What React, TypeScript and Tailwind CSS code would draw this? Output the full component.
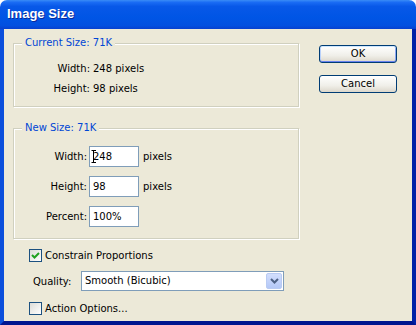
import React from "react";

function Checkbox({ checked }: { checked?: boolean }) {
    return (
        <div className="w-[13px] h-[13px] border border-[#1C5180] bg-[linear-gradient(135deg,#dcdcd7,#ffffff)] flex items-center justify-center">
            {checked && (
                <svg width="9" height="9" viewBox="0 0 9 9">
                    <path d="M1 4 L3.5 6.5 L8 2" fill="none" stroke="#21A121" strokeWidth="2" />
                </svg>
            )}
        </div>
    );
}

function Field({ value, caret }: { value: string; caret?: boolean }) {
    return (
        <div className="relative h-[21px] border border-[#7F9DB9] bg-white pl-[3px] leading-[19px]">
            {value}
            {caret && (
                <svg className="absolute left-[1px] top-[3px]" width="6" height="13" viewBox="0 0 6 13">
                    <path d="M0.5 0.5 H5 M2.5 0.5 V12.5 M0.5 12.5 H5" fill="none" stroke="#000" strokeWidth="1" />
                </svg>
            )}
        </div>
    );
}

export default function App() {
    return (
        <div className="w-[416px] h-[325px] bg-white font-['DejaVu_Sans',sans-serif] text-[10px] text-black select-none">
            <div className="h-[29px] rounded-t-[7px] bg-[linear-gradient(180deg,#3a8cf6_0%,#1a6cf4_8%,#0858e8_22%,#0055e5_60%,#0250e0_88%,#0740cf_100%)] flex items-center pl-[7px] pb-[1px]">
                <span className="font-['Liberation_Sans',sans-serif] font-bold text-[13px] text-white [text-shadow:1px_1px_0_#0b2a9a]">Image Size</span>
            </div>

            <div className="h-[296px] flex bg-[#ECE9D8] border-l-[4px] border-r-[4px] border-b-[4px] border-l-[#0b4fdc] border-r-[#0021a7] border-b-[#00158f]">
                {/* left column */}
                <div className="ml-[9px] w-[286px] pt-[8px]">
                    <fieldset className="border border-[#D0D0BF] shadow-[inset_1px_1px_0_#fff,1px_1px_0_#fff] pb-[7px]">
                        <legend className="ml-[8px] px-[3px] leading-[12px] text-[#0046D5] bg-[#ECE9D8]">Current Size: 71K</legend>
                        <div className="grid grid-cols-[76px_auto] gap-x-[3px] mt-[10px] leading-5">
                            <div className="text-right">Width:</div>
                            <div>248 pixels</div>
                            <div className="text-right">Height:</div>
                            <div>98 pixels</div>
                        </div>
                    </fieldset>

                    <fieldset className="mt-[15px] border border-[#D0D0BF] shadow-[inset_1px_1px_0_#fff,1px_1px_0_#fff] pb-[11px]">
                        <legend className="ml-[8px] px-[3px] leading-[12px] text-[#0046D5] bg-[#ECE9D8]">New Size: 71K</legend>
                        <div className="grid grid-cols-[73px_50px_auto] gap-x-[2px] gap-y-[9px] items-center mt-[12px]">
                            <div className="text-right">Width:</div>
                            <Field value="248" caret />
                            <div className="pl-[2px]">pixels</div>
                            <div className="text-right">Height:</div>
                            <Field value="98" />
                            <div className="pl-[2px]">pixels</div>
                            <div className="text-right">Percent:</div>
                            <Field value="100%" />
                            <div></div>
                        </div>
                    </fieldset>

                    <div className="mt-[10px] ml-[16px] flex items-center gap-[3px] h-[13px]">
                        <Checkbox checked />
                        <span>Constrain Proportions</span>
                    </div>

                    <div className="mt-[9px] ml-[20px] flex items-center">
                        <span className="w-[48px]">Quality:</span>
                        <div className="w-[203px] h-[20px] border border-[#7F9DB9] bg-white flex p-px">
                            <div className="flex-1 pl-[2px] leading-[16px]">Smooth (Bicubic)</div>
                            <div className="w-[16px] rounded-[2px] border border-[#B9CBF3] bg-[linear-gradient(180deg,#d2defd,#b4c8f7)] flex items-center justify-center">
                                <svg width="9" height="6" viewBox="0 0 9 6">
                                    <path d="M1 1 L4.5 4.5 L8 1" fill="none" stroke="#4D6185" strokeWidth="2" />
                                </svg>
                            </div>
                        </div>
                    </div>

                    <div className="mt-[11px] ml-[16px] flex items-center gap-[3px] h-[13px]">
                        <Checkbox />
                        <span>Action Options...</span>
                    </div>
                </div>

                {/* right column */}
                <div className="ml-[20px] w-[78px] pt-[16px] flex flex-col gap-[12px]">
                    <button className="h-[18px] rounded-[3px] border border-[#003C74] bg-[linear-gradient(180deg,#ffffff,#f0efe9_60%,#dcd7cb)] shadow-[inset_0_1px_0_#cee7ff,inset_0_-1px_0_#6982ee,inset_1px_0_0_#b9d1fa,inset_-1px_0_0_#8fa7f3] leading-[16px] text-center">OK</button>
                    <button className="h-[18px] rounded-[3px] border border-[#003C74] bg-[linear-gradient(180deg,#ffffff,#f0efe9_60%,#dcd7cb)] leading-[16px] text-center">Cancel</button>
                </div>
            </div>
        </div>
    );
}
